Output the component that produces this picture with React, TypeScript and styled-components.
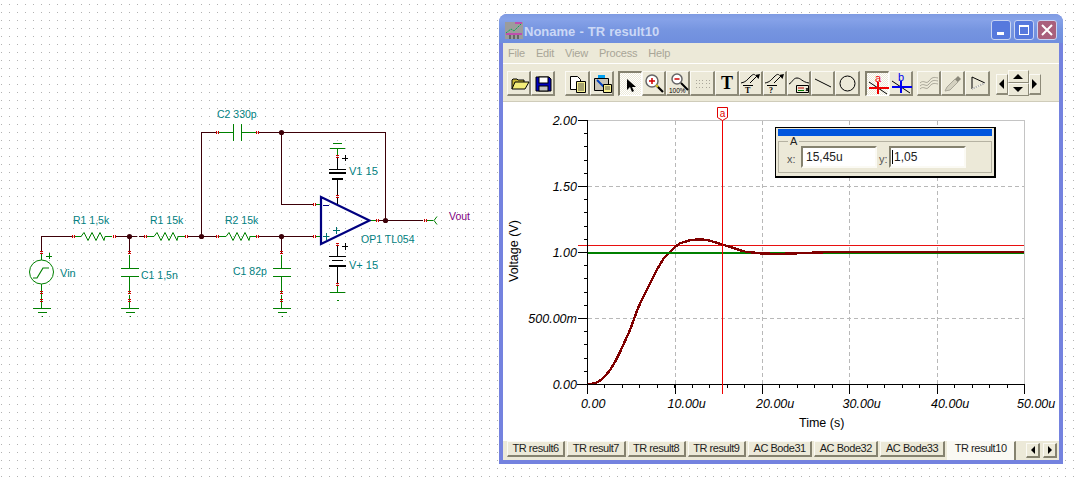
import React from "react";
import styled, { createGlobalStyle } from "styled-components";

const GlobalStyle = createGlobalStyle`
  html, body { margin: 0; padding: 0; background: #fff; }
  body { font-family: "Liberation Sans", Arial, sans-serif; }
`;

const Page = styled.div`
  width: 1079px;
  height: 481px;
  display: flex;
  overflow: hidden;
  background-color: #fff;
  background-image: conic-gradient(from 0deg at 1px 1px, transparent 75%, #b2b2b2 0);
  background-size: 8px 8px;
  background-position: 1px 4px;
`;

const Schematic = styled.svg`
  flex: 0 0 499px;
  width: 499px;
  height: 481px;
  display: block;
`;

const Window = styled.div`
  flex: 0 0 564px;
  width: 564px;
  height: 450px;
  margin-top: 14px;
  padding: 0 4px 4px;
  box-sizing: border-box;
  display: flex;
  flex-direction: column;
  background: #7482df;
  border-radius: 8px 8px 0 0;
  overflow: hidden;
`;

const TitleBar = styled.div`
  flex: 0 0 29px;
  box-sizing: border-box;
  margin: 0 -4px;
  padding: 3px 6px 0;
  display: flex;
  align-items: center;
  background: linear-gradient(#7f9be2 0%, #86a2e8 18%, #7695e0 55%, #6f8ede 100%);
`;

const TitleText = styled.span`
  margin: 2px 0 0 1px;
  flex: 1;
  font: bold 13px "Liberation Sans", sans-serif;
  word-spacing: 0.5px;
  color: #cbd8f6;
  white-space: nowrap;
`;

const CaptionButton = styled.div<{ $close?: boolean }>`
  width: 20px;
  height: 20px;
  margin-left: 3px;
  box-sizing: border-box;
  border: 1px solid #c8d4f2;
  border-radius: 3px;
  background: ${(p) => (p.$close ? "#a9607c" : "#5679dd")};
  display: flex;
  align-items: center;
  justify-content: center;
`;

const MenuBar = styled.div`
  flex: 0 0 20px;
  padding-left: 5px;
  display: flex;
  align-items: center;
  gap: 11px;
  background: #ece9d8;
  border-bottom: 1px solid #fff;
`;

const MenuItem = styled.span`
  font-size: 11px;
  letter-spacing: -0.2px;
  color: #a8a597;
`;

const Toolbar = styled.div`
  flex: 0 0 38px;
  box-sizing: border-box;
  padding: 7px 0 0 4px;
  display: flex;
  align-items: flex-start;
  background: #ece9d8;
  border-bottom: 1px solid #cfccba;
`;

const ToolGroup = styled.div<{ $gap: number }>`
  display: flex;
  margin-right: ${(p) => p.$gap}px;
`;

const ToolButton = styled.div<{ $pressed?: boolean }>`
  width: 24.2px;
  height: 25px;
  box-sizing: border-box;
  border-style: solid;
  border-width: ${(p) => (p.$pressed ? "2px 1px 1px 2px" : "1px 2px 2px 1px")};
  border-color: ${(p) =>
    p.$pressed
      ? "#85826f #fff #fff #85826f"
      : "#fbfaf4 #8d8a78 #8d8a78 #fbfaf4"};
  background-color: #ece9d8;
  background-image: ${(p) =>
    p.$pressed
      ? "repeating-conic-gradient(#fff 0 25%, #ece9d8 0 50%)"
      : "none"};
  background-size: 2px 2px;
  svg { display: block; width: 22px; height: 22px; }
`;

const NavCluster = styled.div`
  display: flex;
  align-items: center;
`;

const NavSide = styled.div`
  width: 12px;
  height: 21px;
  margin-top: 1px;
  box-sizing: border-box;
  border-style: solid;
  border-width: 1px 1px 2px 1px;
  border-color: #fbfaf4 #8d8a78 #8d8a78 #fbfaf4;
  display: flex;
  align-items: center;
  justify-content: center;
`;

const NavStack = styled.div`
  width: 21px;
  margin-top: -1px;
  display: flex;
  flex-direction: column;
`;

const NavStep = styled.div`
  height: 13px;
  box-sizing: border-box;
  border-style: solid;
  border-width: 1px 1px 1px 1px;
  border-color: #fbfaf4 #8d8a78 #8d8a78 #fbfaf4;
  display: flex;
  align-items: center;
  justify-content: center;
`;

const Client = styled.div`
  position: relative;
  flex: 1;
  min-height: 0;
  background: #fff;
`;

const Chart = styled.svg`
  display: block;
  width: 555px;
  height: 339px;
`;

const AxisValue = styled.text`
  font: italic 12.5px "Liberation Sans", sans-serif;
  fill: #000;
`;

const AxisTitle = styled.text`
  font: 12.5px "Liberation Sans", sans-serif;
  fill: #000;
`;

const CursorFlag = styled.text`
  font: 10px "Liberation Sans", sans-serif;
  fill: #e00000;
`;

const CursorPanel = styled.div`
  position: absolute;
  left: 272px;
  top: 25px;
  width: 221px;
  height: 51px;
  box-sizing: border-box;
  border: 1px solid #000;
  border-width: 1px 2px 2px 1px;
  padding: 1px 2px 0;
  background: #ece9d8;
`;

const PanelBar = styled.div`
  height: 7px;
  background: #0055dd;
`;

const PanelGroup = styled.fieldset`
  margin: 1px 0 0;
  padding: 0 0 0 8px;
  height: 36px;
  box-sizing: border-box;
  border: 1px solid #b5b2a2;
  border-radius: 0;
  display: flex;
  align-items: center;
`;

const PanelLegend = styled.legend`
  margin-left: 1px;
  padding: 0 2px;
  font-size: 11px;
  line-height: 9px;
  color: #222;
`;

const FieldLabel = styled.span<{ $w: number }>`
  font-size: 11px;
  color: #555;
  width: ${(p) => p.$w}px;
`;

const FieldValue = styled.div<{ $caret?: boolean; $w: number }>`
  width: ${(p) => p.$w}px;
  height: 22px;
  margin-right: 2px;
  margin-top: -4px;
  box-sizing: border-box;
  padding-left: ${(p) => (p.$caret ? "1px" : "3px")};
  border: 2px solid;
  border-color: #85826f #fbfaf4 #fbfaf4 #85826f;
  background: #fff;
  font-size: 12px;
  line-height: 18px;
  color: #222;
  display: flex;
  align-items: center;
`;

const Caret = styled.i`
  width: 1px;
  height: 14px;
  margin-right: 1px;
  background: #000;
`;

const TabBar = styled.div`
  flex: 0 0 19px;
  box-sizing: border-box;
  padding-left: 4px;
  display: flex;
  background: #ece9d8;
`;

const Tab = styled.div<{ $active?: boolean }>`
  height: ${(p) => (p.$active ? "19px" : "16px")};
  margin-right: 2px;
  padding: 0 ${(p) => (p.$active ? "7px" : "4.5px")};
  box-sizing: border-box;
  border-style: solid;
  border-width: 1px 2px ${(p) => (p.$active ? "0" : "2px")} 1px;
  border-color: #fbfaf4 #85826f #85826f #fbfaf4;
  background: ${(p) => (p.$active ? "#faf9f3" : "#ece9d8")};
  font-size: 11px;
  letter-spacing: -0.45px;
  line-height: 13px;
  color: #1c1c1c;
  white-space: nowrap;
`;

const TabScroll = styled.div`
  margin-left: auto;
  margin-top: 2px;
  margin-right: 2px;
  display: flex;
  gap: 3px;
`;

const TabArrow = styled.div`
  width: 14px;
  height: 15px;
  box-sizing: border-box;
  border-style: solid;
  border-width: 1px 2px 2px 1px;
  border-color: #fbfaf4 #85826f #85826f #fbfaf4;
  display: flex;
  align-items: center;
  justify-content: center;
`;

const Note = styled.text<{ $c?: string; $s?: number }>`
  font: ${(p) => p.$s || 10.5}px "Liberation Sans", sans-serif;
  fill: ${(p) => p.$c || "#008080"};
`;

const WIRE = "#3c0008";
const GREEN = "#008000";
const RED = "#d00000";
const NAVY = "#000080";
const TEAL = "#007070";

const Line = ({ d, c, w = 1 }: { d: string; c: string; w?: number }) => (
  <path d={d} fill="none" stroke={c} strokeWidth={w} shapeRendering="crispEdges" />
);

const HTick = ({ x, y }: { x: number; y: number }) => (
  <path d={`M${x - 1} ${y - 2}v3M${x + 1} ${y - 2}v3`} stroke={RED} shapeRendering="crispEdges" />
);

const VTick = ({ x, y }: { x: number; y: number }) => (
  <path d={`M${x - 2} ${y - 1}h3M${x - 2} ${y + 1}h3`} stroke={RED} shapeRendering="crispEdges" />
);

const Node = ({ x, y }: { x: number; y: number }) => <circle cx={x} cy={y} r={2.6} fill={WIRE} />;

const Ground = ({ x, y, c = GREEN }: { x: number; y: number; c?: string }) => (
  <>
    <Line d={`M${x - 9} ${y}h18`} c={c} />
    <Line d={`M${x - 4} ${y + 4}h9`} c={c} />
    <Line d={`M${x} ${y + 8}h1`} c={c} />
  </>
);

const Resistor = ({ x, y }: { x: number; y: number }) => (
  <path
    d={`M${x} ${y}l3 -4l4 8l4 -8l4 8l4 -8l4 8l1 -4`}
    fill="none"
    stroke={GREEN}
    strokeWidth={1}
  />
);

const ShuntCap = ({ x, y }: { x: number; y: number }) => (
  <>
    <Line d={`M${x} ${y}V${y + 16}`} c={WIRE} />
    <VTick x={x} y={y + 16} />
    <Line d={`M${x} ${y + 18}V${y + 32}M${x} ${y + 40}V${y + 56}`} c={GREEN} />
    <Line d={`M${x - 9} ${y + 32}h18M${x - 9} ${y + 40}h18`} c={GREEN} w={1} />
    <VTick x={x} y={y + 56} />
    <Line d={`M${x} ${y + 58}V${y + 72}`} c={GREEN} />
    <VTick x={x} y={y + 64} />
    <Ground x={x} y={y + 72} />
  </>
);

const CircuitDrawing = () => (
  <Schematic viewBox="0 0 499 481">
    {/* input source */}
    <Line d="M41.5 252V236.5H72" c={WIRE} />
    <VTick x={41.5} y={252} />
    <Line d="M41.5 254V260M41.5 284V308" c={GREEN} />
    <VTick x={41.5} y={292} />
    <VTick x={41.5} y={300} />
    <circle cx={41.5} cy={272} r={12} fill="#fff" stroke={GREEN} />
    <path d="M33 278h4l6 -10h6" fill="none" stroke={GREEN} strokeWidth={1.2} />
    <Line d="M46 256h6M49 253v6" c={GREEN} />
    <Ground x={41.5} y={308} />
    <Note x={60} y={277} $s={11}>Vin</Note>

    {/* input ladder */}
    <HTick x={73.5} y={236.5} />
    <Line d="M75 236.5H81M105 236.5H112" c={GREEN} />
    <Resistor x={81} y={236.5} />
    <HTick x={114} y={236.5} />
    <Line d="M116 236.5H137M139 236.5H144" c={WIRE} />
    <HTick x={145.5} y={236.5} />
    <Line d="M147 236.5H154M178 236.5H185" c={GREEN} />
    <Resistor x={154} y={236.5} />
    <HTick x={186} y={236.5} />
    <Line d="M188 236.5H216" c={WIRE} />
    <HTick x={217.5} y={236.5} />
    <Line d="M219 236.5H226M250 236.5H256" c={GREEN} />
    <Resistor x={226} y={236.5} />
    <HTick x={257.5} y={236.5} />
    <Line d="M259 236.5H313" c={WIRE} />
    <HTick x={314} y={236.5} />
    <Line d="M316 236.5H320" c={GREEN} />
    <ShuntCap x={129.5} y={236.5} />
    <ShuntCap x={281.5} y={236.5} />
    <Note x={73} y={224}>R1 1,5k</Note>
    <Note x={150} y={224}>R1 15k</Note>
    <Note x={225} y={224}>R2 15k</Note>
    <Note x={141} y={279}>C1 1,5n</Note>
    <Note x={233} y={275}>C1 82p</Note>

    {/* feedback */}
    <Line d="M201.5 236.5V132.5H216" c={WIRE} />
    <HTick x={217.5} y={132.5} />
    <Line d="M219 132.5H233.5M242 132.5H256M233.5 124V141M241.5 124V141" c={GREEN} />
    <HTick x={257.5} y={132.5} />
    <Line d="M259 132.5H385.5V220.5M281.5 132.5V204.5H313" c={WIRE} />
    <HTick x={314} y={204.5} />
    <Line d="M316 204.5H320" c={GREEN} />
    <Note x={217} y={118}>C2 330p</Note>

    {/* op amp */}
    <path d="M321 197V244L369.5 220.5Z" fill="none" stroke={NAVY} strokeWidth={2.2} />
    <Line d="M323 205.5h6" c={NAVY} />
    <Line d="M323 236.5h6M326 233v7M333 230.5h7M336.5 227v7" c={TEAL} />
    <Line d="M371 220.5H376" c={GREEN} />
    <HTick x={377.5} y={220.5} />
    <Line d="M379 220.5H423" c={WIRE} />
    <HTick x={425} y={220.5} />
    <Line d="M427 220.5H433" c={GREEN} />
    <path d="M437 216.5l-3 4l3 4" fill="none" stroke={GREEN} />
    <Note x={449} y={220} $c="#800080">Vout</Note>
    <Note x={361} y={243}>OP1 TL054</Note>

    {/* supplies */}
    <Line d="M333 143.5h9M330 148.5h15M337.5 148.5V155" c={GREEN} />
    <VTick x={337.5} y={156} />
    <Line d="M337.5 158V169M337.5 179V195M337.5 198V204" c="#000" />
    <VTick x={337.5} y={196} />
    <Line d="M329 169.5h17" c="#000" />
    <Line d="M329 173h17M332 179h11" c="#000" w={2} />
    <Line d="M342 158h6M345 155v6" c="#000" />
    <Note x={349} y={175} $s={11}>V1 15</Note>

    <VTick x={337.5} y={244} />
    <Line d="M337.5 246V257M337.5 266V283" c="#000" />
    <Line d="M329 256.5h17M332 260.5h11" c="#000" />
    <Line d="M329 266h17" c="#000" w={2} />
    <VTick x={337.5} y={284} />
    <Line d="M337.5 286V292M330 292.5h15M337 300.5h2" c={GREEN} />
    <Line d="M342 246.5h6M345 243v7" c="#000" />
    <Note x={349} y={269} $s={11}>V+ 15</Note>

    <Node x={129.5} y={236.5} />
    <Node x={201.5} y={236.5} />
    <Node x={281.5} y={236.5} />
    <Node x={281.5} y={132.5} />
    <Node x={385.5} y={220.5} />
  </Schematic>
);

const TRACE =
  "587,384 594,383.6 598,382 602,379 606,375 610,370 615,362 620,352 625,341 630,330 638,308 646.7,290 656.7,270 664,258 670,252 675,247 680,243.3 690,240.2 700,239.3 708,240.2 716.7,242.7 722,244.6 730,246.7 738,249.6 745,251.7 760,253.3 777,254 797,253.3 823,252.3 840,252 1024,252";

const xTicks = [587.5, 675, 762.5, 849.5, 937.5, 1024.5];
const xLabels = ["0.00", "10.00u", "20.00u", "30.00u", "40.00u", "50.00u"];
const xLabelAt = [581, 667.5, 756, 842.5, 931, 1017];
const yTicks: [number, string][] = [
  [120.5, "2.00"],
  [186.5, "1.50"],
  [252.5, "1.00"],
  [318.5, "500.00m"],
  [384.5, "0.00"],
];

const ResultChart = () => (
  <Chart viewBox="503 102 555 339">
    <Line d="M587 120.5H1024.5V384" c="#c4c4c4" />
    <path
      d="M675 121V384M762.5 121V384M849.5 121V384M937.5 121V384M588 186.5H1024M588 318.5H1024"
      stroke="#b8b8b8"
      strokeDasharray="4 3"
      fill="none"
      shapeRendering="crispEdges"
    />
    <Line d="M578 245.5H1024" c="#e81010" />
    <Line d="M587 252.5H1024" c={GREEN} w={2} />
    <polyline points={TRACE} fill="none" stroke="#800000" strokeWidth={2.4} shapeRendering="crispEdges" />
    <Line d="M587 252.5H745" c={GREEN} w={2} />
    <Line d="M587.5 120V394M577 384.5H1024.5" c="#000" />
    {Array.from({ length: 20 }, (_, i) => 120.5 + i * 13.2).map((y) => (
      <Line key={y} d={`M584 ${Math.floor(y)}.5h3`} c="#000" />
    ))}
    {Array.from({ length: 25 }, (_, i) => 587.5 + i * 17.48).map((x) => (
      <Line key={x} d={`M${Math.floor(x)}.5 384v4`} c="#000" />
    ))}
    {xTicks.map((x) => (
      <Line key={x} d={`M${x} 384V394`} c="#000" />
    ))}
    {yTicks.map(([y]) => (
      <Line key={y} d={`M578 ${y}H587`} c="#000" />
    ))}
    {yTicks.map(([y, label]) => (
      <AxisValue key={label} x={577} y={y + 4} textAnchor="end">
        {label}
      </AxisValue>
    ))}
    {xLabels.map((label, i) => (
      <AxisValue key={label} x={xLabelAt[i]} y={408}>
        {label}
      </AxisValue>
    ))}
    <AxisTitle x={799} y={427}>Time (s)</AxisTitle>
    <AxisTitle transform="translate(518 282) rotate(-90)">Voltage (V)</AxisTitle>
    <Line d="M722.5 120V394" c="#f00000" />
    <path d="M717.5 107.5h10v10l-5 3l-5 -3z" fill="#fff" stroke="#e00000" />
    <CursorFlag x={719.8} y={116.5}>a</CursorFlag>
  </Chart>
);

/* toolbar glyphs, 22 x 22 */
const OpenIcon = () => (
  <svg viewBox="0 0 22 22">
    <path d="M4 17V8l1-1h4l1 1h6v2" fill="#c8b838" stroke="#000" />
    <path d="M4 17l3-7h14l-4 7z" fill="#f4ee7a" stroke="#000" />
  </svg>
);
const SaveIcon = () => (
  <svg viewBox="0 0 22 22">
    <path d="M4 5h13l2 2v12H4z" fill="#0000c0" stroke="#000" />
    <rect x="7" y="5" width="9" height="6" fill="#fff" stroke="#000" />
    <rect x="7" y="14" width="9" height="5" fill="#c0c0c0" stroke="#000" />
  </svg>
);
const CopyIcon = () => (
  <svg viewBox="0 0 22 22">
    <path d="M4.5 4.5h7l3 3v10h-10z" fill="#fff" stroke="#000" />
    <path d="M10.5 9.5h9v11h-9z" fill="#f6f090" stroke="#000" />
    <path d="M12 12h6M12 14h6M12 16h6M12 18h6" stroke="#555" />
  </svg>
);
const PasteIcon = () => (
  <svg viewBox="0 0 22 22">
    <path d="M3.5 6.5h14v12h-14z" fill="#c8c4b8" stroke="#000" />
    <rect x="7" y="3" width="7" height="3" fill="#00a0f0" />
    <path d="M6 8l7 7" stroke="#0040c0" strokeWidth="2" />
    <path d="M12.5 12.5h8v8h-8z" fill="#f6f090" stroke="#000" />
    <path d="M14 15h5M14 17h5" stroke="#555" />
  </svg>
);
const ArrowIcon = () => (
  <svg viewBox="0 0 22 22">
    <path d="M7 6v11l3-3l2 5l2-1l-2-4h4z" fill="#000" />
  </svg>
);
const ZoomInIcon = () => (
  <svg viewBox="0 0 22 22">
    <circle cx="9" cy="9" r="6" fill="#fff" stroke="#666" strokeWidth="1.5" />
    <path d="M6 9h6M9 6v6" stroke="#d00000" strokeWidth="1.5" />
    <path d="M14 14l6 6" stroke="#000" strokeWidth="2.2" />
    <path d="M13 13l2 2" stroke="#d8c020" strokeWidth="2.2" />
  </svg>
);
const ZoomFitIcon = () => (
  <svg viewBox="0 0 22 22">
    <circle cx="10" cy="7" r="5" fill="#fff" stroke="#666" strokeWidth="1.5" />
    <path d="M7.5 7h5" stroke="#d00000" strokeWidth="1.5" />
    <path d="M14 11l7 7" stroke="#000" strokeWidth="2" />
    <text x="2" y="20.5" fontSize="6.5" fontFamily="Liberation Sans">100%</text>
  </svg>
);
const GridIcon = () => (
  <svg viewBox="0 0 22 22">
    <path
      d="M5 8h14M5 11.5h14M5 15h14"
      stroke="#aaa69a"
      strokeDasharray="1 2.2"
      fill="none"
      shapeRendering="crispEdges"
    />
  </svg>
);
const TextIcon = () => (
  <svg viewBox="0 0 22 22">
    <text x="11" y="17" textAnchor="middle" fontSize="18" fontWeight="bold" fontFamily="Liberation Serif">
      T
    </text>
  </svg>
);
const CurveMark = ({ mark }: { mark: string }) => (
  <svg viewBox="0 0 22 22">
    <path d="M1 11c5-1 6-3 9-6s4-3 5-2" fill="none" stroke="#000" />
    <path d="M10 11l7-7" stroke="#000" />
    <path d="M15 3l5-1l-1.5 5z" fill="#000" />
    <path d="M3 13.5h10" stroke="#000" fill="none" />
    <text x="5" y="20.5" fontSize="8" fontWeight="bold" fontFamily="Liberation Serif">
      {mark}
    </text>
  </svg>
);
const LegendIcon = () => (
  <svg viewBox="0 0 22 22">
    <path d="M1 12c3-1 4-6 8-6s5 4 12 5" fill="none" stroke="#000" />
    <path d="M8.5 13.5h12v7h-12z" fill="#ece9d8" stroke="#000" />
    <path d="M10 16h6" stroke="#c00000" />
    <path d="M10 18.5h6" stroke="#008000" />
    <path d="M18 16l2 3M20 16l-2 3" stroke="#000" />
  </svg>
);
const LineIcon = () => (
  <svg viewBox="0 0 22 22">
    <path d="M3 7l16 8" stroke="#000" />
  </svg>
);
const CircleIcon = () => (
  <svg viewBox="0 0 22 22">
    <circle cx="11.5" cy="11.5" r="7.5" fill="none" stroke="#000" />
  </svg>
);
const CursorIcon = ({ c, mark }: { c: string; mark: string }) => (
  <svg viewBox="0 0 22 22">
    <path d="M2 9l18 12" stroke="#000" />
    <path d="M2 15h20M11 9v12" stroke={c} strokeWidth="1.2" shapeRendering="crispEdges" />
    <text x="11" y="9" textAnchor="middle" fontSize="11" fontFamily="Liberation Sans" fill={c}>
      {mark}
    </text>
  </svg>
);
const WaveIcon = () => (
  <svg viewBox="0 0 22 22">
    <path
      d="M2 11c4-4 6 2 9-2s5-4 9-3M2 14c4-4 6 2 9-2s5-4 9-3M2 17c4-4 6 2 9-2s5-4 9-3"
      fill="none"
      stroke="#a8a597"
    />
  </svg>
);
const DropperIcon = () => (
  <svg viewBox="0 0 22 22">
    <path d="M3 19l2-4l8-8l3 3l-8 8z" fill="#d4d1c0" stroke="#a8a597" />
    <path d="M13 7l3-3l3 3l-3 3z" fill="#8a887a" />
  </svg>
);
const FlagIcon = () => (
  <svg viewBox="0 0 22 22">
    <path d="M6 17V5" stroke="#000" />
    <path d="M6 5l13 6l-13 6" fill="none" stroke="#000" />
    <path d="M6 17l13 -6" stroke="#fff" />
  </svg>
);

const TriangleSvg = styled.svg`
  display: block;
`;

const Triangle = ({ dir, size = 5 }: { dir: "l" | "r" | "u" | "d"; size?: number }) => {
  const s = size;
  const points = {
    l: `${s},0 ${s},${s * 2} 0,${s}`,
    r: `0,0 0,${s * 2} ${s},${s}`,
    u: `0,${s} ${s * 2},${s} ${s},0`,
    d: `0,0 ${s * 2},0 ${s},${s}`,
  }[dir];
  const wide = dir === "u" || dir === "d";
  return (
    <TriangleSvg width={wide ? s * 2 : s} height={wide ? s : s * 2}>
      <polygon points={points} fill="#000" />
    </TriangleSvg>
  );
};

const AppIcon = () => (
  <svg width="18" height="17" viewBox="0 0 18 17">
    <rect width="18" height="17" fill="#9c9c9c" />
    <path d="M1 11l5-4l3 2l7-7" fill="none" stroke="#00b050" strokeDasharray="2 1" />
    <path d="M1 12h16M10 1h7" stroke="#e000c0" />
    <path d="M5 13v4M9 13v4M13 13v4" stroke="#303030" />
  </svg>
);

const tabs = [
  "TR result6",
  "TR result7",
  "TR result8",
  "TR result9",
  "AC Bode31",
  "AC Bode32",
  "AC Bode33",
];

export default function App() {
  return (
    <>
      <GlobalStyle />
      <Page>
        <CircuitDrawing />
        <Window>
          <TitleBar>
            <AppIcon />
            <TitleText>Noname - TR result10</TitleText>
            <CaptionButton>
              <svg width="10" height="10"><rect x="1" y="7" width="7" height="3" fill="#fff" /></svg>
            </CaptionButton>
            <CaptionButton>
              <svg width="12" height="12">
                <rect x="1.5" y="1.5" width="9" height="9" fill="none" stroke="#fff" />
                <rect x="1" y="1" width="10" height="2" fill="#fff" />
              </svg>
            </CaptionButton>
            <CaptionButton $close>
              <svg width="12" height="12"><path d="M1 1l10 10M11 1L1 11" stroke="#fff" strokeWidth="2" /></svg>
            </CaptionButton>
          </TitleBar>
          <MenuBar>
            {["File", "Edit", "View", "Process", "Help"].map((m) => (
              <MenuItem key={m}>{m}</MenuItem>
            ))}
          </MenuBar>
          <Toolbar>
            <ToolGroup $gap={10}>
              <ToolButton><OpenIcon /></ToolButton>
              <ToolButton><SaveIcon /></ToolButton>
            </ToolGroup>
            <ToolGroup $gap={4}>
              <ToolButton><CopyIcon /></ToolButton>
              <ToolButton><PasteIcon /></ToolButton>
            </ToolGroup>
            <ToolGroup $gap={5}>
              <ToolButton $pressed><ArrowIcon /></ToolButton>
              <ToolButton><ZoomInIcon /></ToolButton>
              <ToolButton><ZoomFitIcon /></ToolButton>
              <ToolButton><GridIcon /></ToolButton>
              <ToolButton><TextIcon /></ToolButton>
              <ToolButton><CurveMark mark="T" /></ToolButton>
              <ToolButton><CurveMark mark="?" /></ToolButton>
              <ToolButton><LegendIcon /></ToolButton>
              <ToolButton><LineIcon /></ToolButton>
              <ToolButton><CircleIcon /></ToolButton>
            </ToolGroup>
            <ToolGroup $gap={4}>
              <ToolButton $pressed><CursorIcon c="#f00000" mark="a" /></ToolButton>
              <ToolButton><CursorIcon c="#0000f0" mark="b" /></ToolButton>
            </ToolGroup>
            <ToolGroup $gap={6}>
              <ToolButton><WaveIcon /></ToolButton>
              <ToolButton><DropperIcon /></ToolButton>
              <ToolButton><FlagIcon /></ToolButton>
            </ToolGroup>
            <NavCluster>
              <NavSide><Triangle dir="l" /></NavSide>
              <NavStack>
                <NavStep><Triangle dir="u" /></NavStep>
                <NavStep><Triangle dir="d" /></NavStep>
              </NavStack>
              <NavSide><Triangle dir="r" /></NavSide>
            </NavCluster>
          </Toolbar>
          <Client>
            <ResultChart />
            <CursorPanel>
              <PanelBar />
              <PanelGroup>
                <PanelLegend>A</PanelLegend>
                <FieldLabel $w={14}>x:</FieldLabel>
                <FieldValue $w={76}>15,45u</FieldValue>
                <FieldLabel $w={10}>y:</FieldLabel>
                <FieldValue $w={77} $caret><Caret />1,05</FieldValue>
              </PanelGroup>
            </CursorPanel>
          </Client>
          <TabBar>
            {tabs.map((t) => (
              <Tab key={t}>{t}</Tab>
            ))}
            <Tab $active>TR result10</Tab>
            <TabScroll>
              <TabArrow><Triangle dir="l" size={4} /></TabArrow>
              <TabArrow><Triangle dir="r" size={4} /></TabArrow>
            </TabScroll>
          </TabBar>
        </Window>
      </Page>
    </>
  );
}
